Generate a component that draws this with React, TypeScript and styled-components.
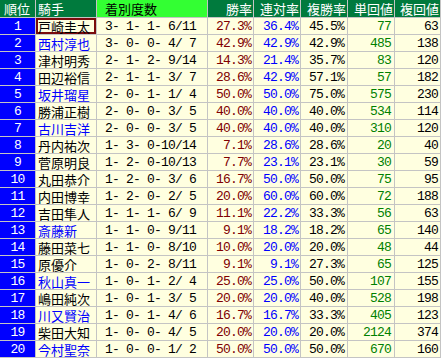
import React from "react";
import styled, { createGlobalStyle } from "styled-components";

const Global = createGlobalStyle`
  html, body { margin: 0; padding: 0; background: #ffffff; }
`;

const COLS = "35px 60px 110px 45px 46px 46px 46px 45px";
const JP = `"Noto Sans CJK JP", "Noto Sans CJK SC", sans-serif`;
const MONO = `"Liberation Mono", "DejaVu Sans Mono", monospace`;

const Table = styled.div`
  display: inline-flex;
  flex-direction: column;
  gap: 1px;
  background: #c4c4c4;
  padding: 0 1px 1px 0;
  font-family: ${JP};
`;

const Row = styled.div<{ $h: number }>`
  display: grid;
  grid-template-columns: ${COLS};
  gap: 1px;
  height: ${(p) => p.$h}px;
`;

const HeadCell = styled.div<{ $bright?: boolean; $align?: string }>`
  display: flex;
  align-items: center;
  justify-content: ${(p) => p.$align || "flex-end"};
  background: ${(p) => (p.$bright ? "#33ff33" : "#007a3d")};
  color: ${(p) => (p.$bright ? "#000000" : "#ffffff")};
  font-family: ${JP};
  font-size: 13px;
  line-height: 1;
  padding: 0 ${(p) => (p.$align === "flex-start" ? "0" : "1px")} 0
    ${(p) => (p.$bright ? "8px" : p.$align === "flex-start" ? "2px" : "0")};
  white-space: nowrap;
  overflow: hidden;
`;

const RankCell = styled.div`
  display: flex;
  align-items: center;
  justify-content: center;
  background: #0000ff;
  color: #ffffff;
  font-family: ${MONO};
  font-size: 13px;
  letter-spacing: -0.8px;
`;

const NameCell = styled.div<{ $blue?: boolean; $mark?: boolean }>`
  display: flex;
  align-items: center;
  background: #ffffe0;
  color: ${(p) => (p.$blue ? "#0000ff" : "#000000")};
  font-family: ${JP};
  font-size: 13px;
  line-height: 1;
  padding-left: 2px;
  white-space: nowrap;
  overflow: hidden;
  box-shadow: ${(p) => (p.$mark ? "inset 0 0 0 2px #7a0c0c" : "none")};
`;

const RecordCell = styled.div`
  display: flex;
  align-items: center;
  background: #ffffe0;
  color: #000000;
  font-family: ${MONO};
  font-size: 13px;
  letter-spacing: -0.8px;
  padding-left: 8px;
  white-space: pre;
`;

const NumCell = styled.div<{ $color: string; $pad?: number }>`
  display: flex;
  align-items: center;
  justify-content: flex-end;
  background: #ffffe0;
  color: ${(p) => p.$color};
  font-family: ${MONO};
  font-size: 13px;
  letter-spacing: -0.8px;
  padding-right: ${(p) => p.$pad ?? 2}px;
  white-space: pre;
`;

type R = [string, boolean, string, string, string, string, string, string];

const rows: R[] = [
  ["戸崎圭太", false, "3- 1- 1- 6/11", "27.3%", "36.4%", "45.5%", "77", "63"],
  ["西村淳也", true, "3- 0- 0- 4/ 7", "42.9%", "42.9%", "42.9%", "485", "138"],
  ["津村明秀", false, "2- 1- 2- 9/14", "14.3%", "21.4%", "35.7%", "83", "120"],
  ["田辺裕信", false, "2- 1- 1- 3/ 7", "28.6%", "42.9%", "57.1%", "57", "182"],
  ["坂井瑠星", true, "2- 0- 1- 1/ 4", "50.0%", "50.0%", "75.0%", "575", "230"],
  ["勝浦正樹", false, "2- 0- 0- 3/ 5", "40.0%", "40.0%", "40.0%", "534", "114"],
  ["古川吉洋", true, "2- 0- 0- 3/ 5", "40.0%", "40.0%", "40.0%", "310", "120"],
  ["丹内祐次", false, "1- 3- 0-10/14", "7.1%", "28.6%", "28.6%", "20", "40"],
  ["菅原明良", false, "1- 2- 0-10/13", "7.7%", "23.1%", "23.1%", "30", "59"],
  ["丸田恭介", false, "1- 2- 0- 3/ 6", "16.7%", "50.0%", "50.0%", "75", "95"],
  ["内田博幸", false, "1- 2- 0- 2/ 5", "20.0%", "60.0%", "60.0%", "72", "188"],
  ["吉田隼人", false, "1- 1- 1- 6/ 9", "11.1%", "22.2%", "33.3%", "56", "63"],
  ["斎藤新", true, "1- 1- 0- 9/11", "9.1%", "18.2%", "18.2%", "65", "140"],
  ["藤田菜七", false, "1- 1- 0- 8/10", "10.0%", "20.0%", "20.0%", "48", "44"],
  ["原優介", false, "1- 0- 2- 8/11", "9.1%", "9.1%", "27.3%", "65", "125"],
  ["秋山真一", true, "1- 0- 1- 2/ 4", "25.0%", "25.0%", "50.0%", "107", "155"],
  ["嶋田純次", false, "1- 0- 1- 3/ 5", "20.0%", "20.0%", "40.0%", "528", "198"],
  ["川又賢治", true, "1- 0- 1- 4/ 6", "16.7%", "16.7%", "33.3%", "405", "123"],
  ["柴田大知", false, "1- 0- 0- 4/ 5", "20.0%", "20.0%", "20.0%", "2124", "374"],
  ["今村聖奈", true, "1- 0- 0- 1/ 2", "50.0%", "50.0%", "50.0%", "670", "160"],
];

export default function App() {
  return (
    <>
      <Global />
      <Table>
        <Row $h={17}>
          <HeadCell $align="center">順位</HeadCell>
          <HeadCell $align="flex-start">騎手</HeadCell>
          <HeadCell $bright $align="flex-start">着別度数</HeadCell>
          <HeadCell>勝率</HeadCell>
          <HeadCell>連対率</HeadCell>
          <HeadCell>複勝率</HeadCell>
          <HeadCell>単回値</HeadCell>
          <HeadCell>複回値</HeadCell>
        </Row>
        {rows.map((r, i) => (
          <Row $h={16} key={i}>
            <RankCell>{i + 1}</RankCell>
            <NameCell $blue={r[1]} $mark={i === 0}>
              {r[0]}
            </NameCell>
            <RecordCell>{r[2]}</RecordCell>
            <NumCell $color="#800000">{r[3]}</NumCell>
            <NumCell $color="#0000ff">{r[4]}</NumCell>
            <NumCell $color="#000000" $pad={3}>{r[5]}</NumCell>
            <NumCell $color="#008000" $pad={3}>{r[6]}</NumCell>
            <NumCell $color="#000000">{r[7]}</NumCell>
          </Row>
        ))}
      </Table>
    </>
  );
}
